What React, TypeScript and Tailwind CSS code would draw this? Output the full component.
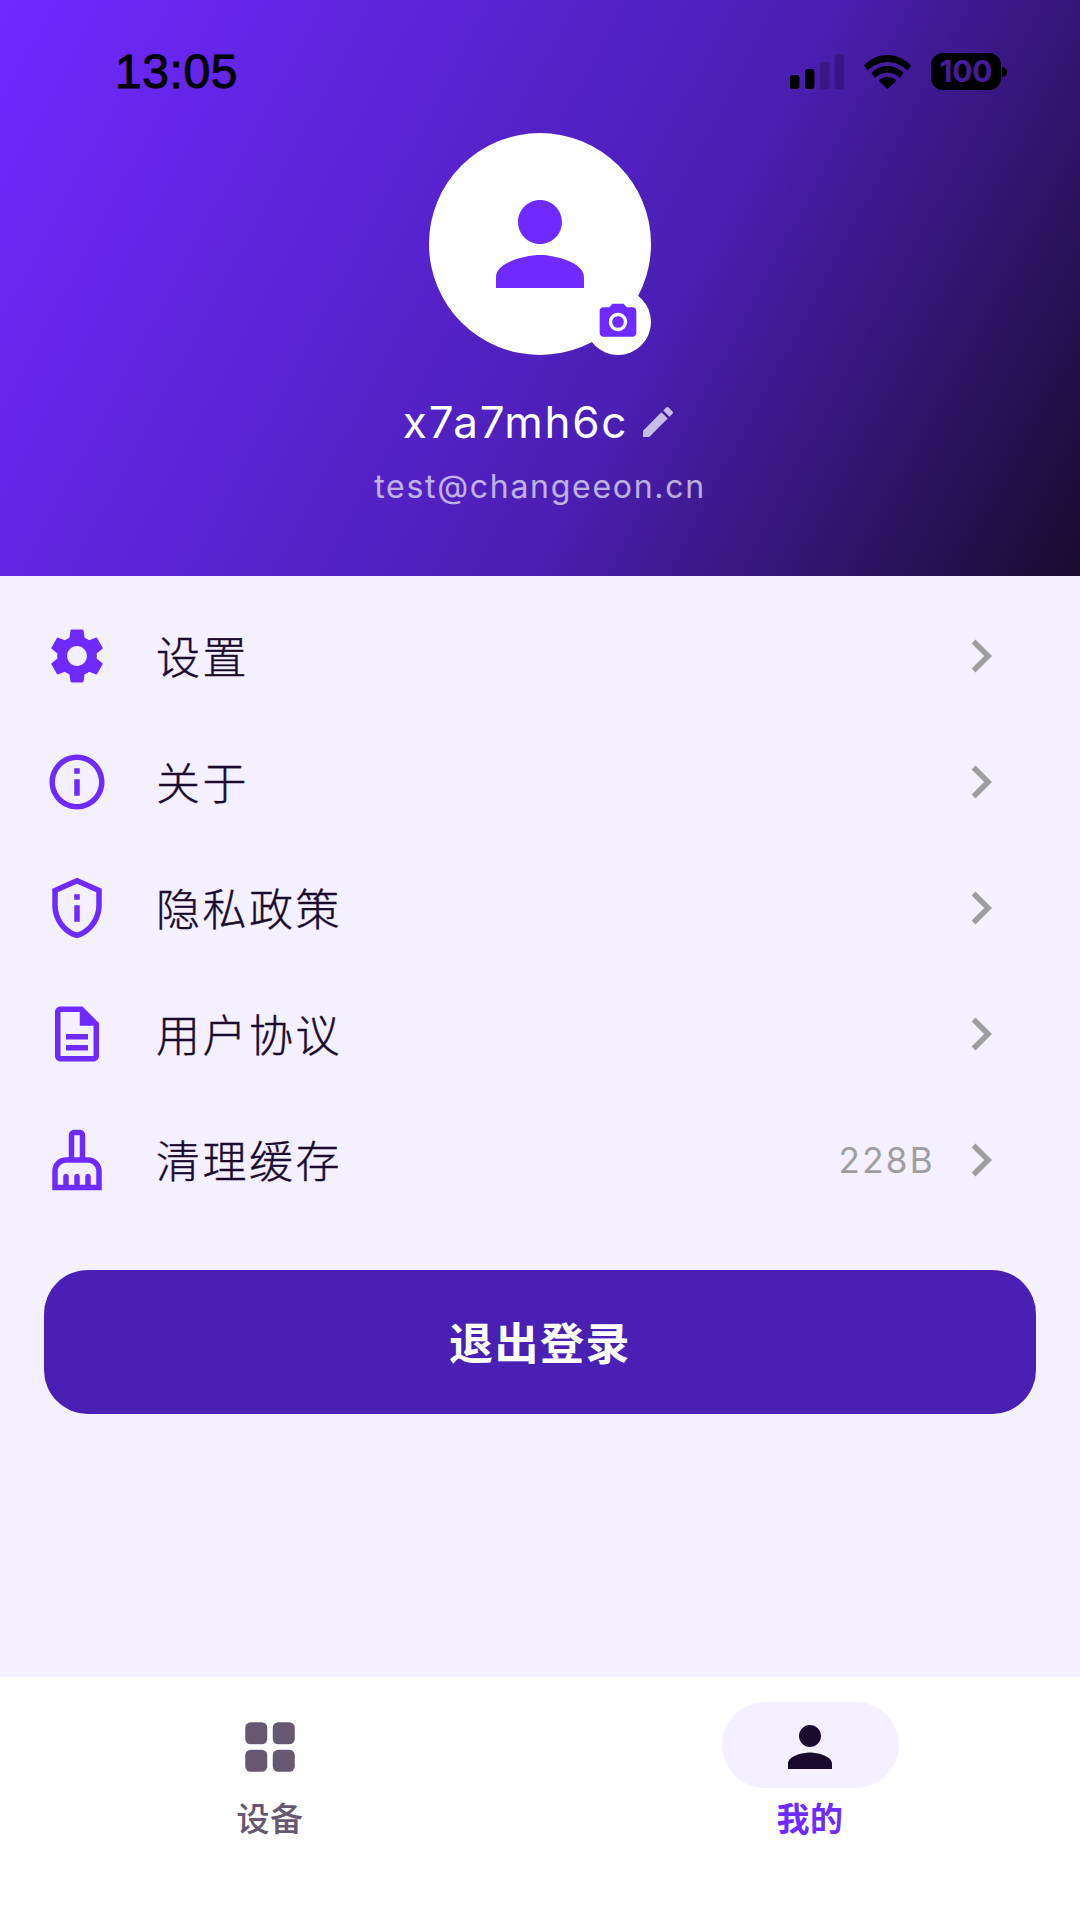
import type { ReactNode } from 'react';

const ICONS = {
    settings: 'M19.14 12.94c.04-.3.06-.61.06-.94 0-.32-.02-.64-.07-.94l2.03-1.58a.49.49 0 0 0 .12-.61l-1.92-3.32a.488.488 0 0 0-.59-.22l-2.39.96c-.5-.38-1.03-.7-1.62-.94l-.36-2.54a.484.484 0 0 0-.48-.41h-3.84c-.24 0-.43.17-.47.41l-.36 2.54c-.59.24-1.13.57-1.62.94l-2.39-.96c-.22-.08-.47 0-.59.22L2.74 8.87c-.12.21-.08.47.12.61l2.03 1.58c-.05.3-.09.63-.09.94s.02.64.07.94l-2.03 1.58a.49.49 0 0 0-.12.61l1.92 3.32c.12.22.37.29.59.22l2.39-.96c.5.38 1.03.7 1.62.94l.36 2.54c.05.24.24.41.48.41h3.84c.24 0 .44-.17.47-.41l.36-2.54c.59-.24 1.13-.56 1.62-.94l2.39.96c.22.08.47 0 .59-.22l1.92-3.32c.12-.22.07-.47-.12-.61l-2.01-1.58zM12 15.6c-1.98 0-3.6-1.62-3.6-3.6s1.62-3.6 3.6-3.6 3.6 1.62 3.6 3.6-1.62 3.6-3.6 3.6z',
    info: 'M11 7h2v2h-2zm0 4h2v6h-2zm1-9C6.48 2 2 6.48 2 12s4.48 10 10 10 10-4.48 10-10S17.52 2 12 2zm0 18c-4.41 0-8-3.59-8-8s3.59-8 8-8 8 3.59 8 8-3.59 8-8 8z',
    privacy: 'M12 1L3 5v6c0 5.55 3.84 10.74 9 12 5.16-1.26 9-6.45 9-12V5l-9-4zm7 10c0 4.52-2.98 8.69-7 9.93-4.02-1.24-7-5.41-7-9.93V6.3l7-3.11 7 3.11V11zM11 7h2v2h-2zm0 4h2v6h-2z',
    doc: 'M8 16h8v2H8zm0-4h8v2H8zm6-10H6c-1.1 0-2 .9-2 2v16c0 1.1.89 2 1.99 2H18c1.1 0 2-.9 2-2V8l-6-6zm4 18H6V4h7v5h5v11z',
    broom: 'M16 11h-1V3c0-1.1-.9-2-2-2h-2c-1.1 0-2 .9-2 2v8H8c-2.76 0-5 2.24-5 5v7h18v-7c0-2.76-2.24-5-5-5zm-5-8h2v8h-2V3zm8 18h-2v-3c0-.55-.45-1-1-1s-1 .45-1 1v3h-2v-3c0-.55-.45-1-1-1s-1 .45-1 1v3H9v-3c0-.55-.45-1-1-1s-1 .45-1 1v3H5v-5c0-1.65 1.35-3 3-3h8c1.65 0 3 1.35 3 3v5z',
    chevron: 'M10 6 8.59 7.41 13.17 12l-4.58 4.59L10 18l6-6z',
    person: 'M12 12c2.21 0 4-1.79 4-4s-1.79-4-4-4-4 1.79-4 4 1.79 4 4 4zm0 2c-2.67 0-8 1.34-8 4v2h16v-2c0-2.66-5.33-4-8-4z',
    camera: 'M12 15.2a3.2 3.2 0 1 0 0-6.4 3.2 3.2 0 0 0 0 6.4zM9 2 7.17 4H4c-1.1 0-2 .9-2 2v12c0 1.1.9 2 2 2h16c1.1 0 2-.9 2-2V6c0-1.1-.9-2-2-2h-3.17L15 2H9zm3 15c-2.76 0-5-2.24-5-5s2.24-5 5-5 5 2.24 5 5-2.24 5-5 5z',
    edit: 'M3 17.25V21h3.75L17.81 9.94l-3.75-3.75L3 17.25zM20.71 7.04c.39-.39.39-1.02 0-1.41l-2.34-2.34a.996.996 0 0 0-1.41 0l-1.83 1.83 3.75 3.75 1.83-1.83z',
};

function Icon({ d, className }: { d: string; className: string }) {
    return (
        <svg viewBox="0 0 24 24" fill="currentColor" className={className}>
            <path d={d} />
        </svg>
    );
}

function StatusBar() {
    return (
        <div className="flex h-[133px] items-start pt-[48px] pl-[115px] pr-[73px] text-black">
            <span className="font-['Liberation_Sans'] text-[48px] leading-[47px] tracking-[0.6px] [-webkit-text-stroke:1px_black]">13:05</span>
            <div className="ml-auto flex items-start gap-[20px] pt-[6px]">
                <svg viewBox="0 0 54 35" className="h-[35px] w-[54px]">
                    <rect x="0" y="21" width="9.500" height="14" rx="3" fill="#000" />
                    <rect x="15" y="15" width="9.500" height="20" rx="3" fill="#000" />
                    <rect x="30" y="8" width="9.500" height="27" rx="3" fill="#000" opacity="0.22" />
                    <rect x="44.500" y="0" width="9.500" height="35" rx="3" fill="#000" opacity="0.22" />
                </svg>
                <svg viewBox="0 0 47 34" className="mt-px h-[34px] w-[47px]">
                    <path d="M23.500 0C14.500 0 6.500 3.600 0 10.500L3.500 15.500C9 10.500 15.800 7 23.500 7S38 10.500 43.500 15.500L47 10.500C40.500 3.600 32.500 0 23.500 0Z" fill="#000" />
                    <path d="M23.500 11C17.500 11 12 13.300 7.500 18L11 23C14.500 19.800 18.800 17.500 23.500 17.500S32.500 19.800 36 23L39.500 18C35 13.300 29.500 11 23.500 11Z" fill="#000" />
                    <path d="M23.500 22C20 22 17 23.300 14.500 25.500L23.500 34L32.500 25.500C30 23.300 27 22 23.500 22Z" fill="#000" />
                </svg>
                <div className="-mt-[1px] flex items-center gap-[1px]">
                    <div className="flex h-[37px] w-[70px] items-center justify-center rounded-[12px] bg-black text-[30px] font-bold tracking-[-0.2px] text-[#421d9c]">
                        100
                    </div>
                    <div className="h-[10px] w-[5px] rounded-r-full bg-black" />
                </div>
            </div>
        </div>
    );
}

function Profile() {
    return (
        <div className="flex flex-col items-center">
            <div className="relative flex h-[222px] w-[222px] items-center justify-center rounded-full bg-white">
                <Icon d={ICONS.person} className="h-[132px] w-[132px] text-[#6f2bff]" />
                <div className="absolute right-0 bottom-0 flex h-[66px] w-[66px] items-center justify-center rounded-full bg-white">
                    <Icon d={ICONS.camera} className="h-[44px] w-[44px] text-[#6f2bff]" />
                </div>
            </div>
            <div className="mt-[37px] flex h-[60px] items-center pl-[1px]">
                <span className="text-[44px] tracking-[1.75px] text-white">x7a7mh6c</span>
                <Icon d={ICONS.edit} className="ml-[10px] h-[40px] w-[40px] text-white/70" />
            </div>
            <span className="mt-[11px] text-[32px] leading-[48px] tracking-[1.7px] text-white/65">test@changeeon.cn</span>
        </div>
    );
}

const MENU = [
    { icon: ICONS.settings, label: '设置' },
    { icon: ICONS.info, label: '关于' },
    { icon: ICONS.privacy, label: '隐私政策' },
    { icon: ICONS.doc, label: '用户协议' },
    { icon: ICONS.broom, label: '清理缓存', value: '228B' },
];

function MenuRow({ icon, label, value }: { icon: string; label: string; value?: string }) {
    return (
        <div className="flex h-[126px] items-center pl-[44px] pr-[66px]">
            <Icon d={icon} className="h-[66px] w-[66px] text-[#6f2bff]" />
            <span className="mt-[3px] ml-[46px] text-[44px] leading-none font-light tracking-[2.5px] text-[#1a0b2e] [-webkit-text-stroke:0.4px_#1a0b2e]">{label}</span>
            {value && <span className="mr-[13px] ml-auto text-[35px] tracking-[2.3px] text-[#9e9e9e]">{value}</span>}
            <Icon d={ICONS.chevron} className={`${value ? '' : 'ml-auto '}h-[66px] w-[66px] text-[#9e9e9e]`} />
        </div>
    );
}

function NavItem({ label, active, children }: { label: string; active?: boolean; children: ReactNode }) {
    return (
        <div className="flex flex-1 flex-col items-center">
            <div className={`flex h-[86px] w-[177px] items-center justify-center rounded-full pt-[4px] ${active ? 'bg-[#f4f0ff]' : ''}`}>{children}</div>
            <span className={`mt-[11px] text-[33px] leading-[40px] tracking-[0.5px] ${active ? 'font-bold text-[#6f2bff]' : 'font-medium text-[#655870]'}`}>{label}</span>
        </div>
    );
}

export default function App() {
    return (
        <div className="flex h-[1920px] w-[1080px] flex-col overflow-hidden bg-[#f4f0ff] font-['Inter','Noto_Sans_CJK_SC',sans-serif]">
            <header className="h-[576px] bg-[linear-gradient(118deg,#7029ff_0%,#4a1fb3_60%,#1a0b2e_100%)]">
                <StatusBar />
                <Profile />
            </header>

            <main className="flex-1 pt-[17px]">
                {MENU.map((item) => (
                    <MenuRow key={item.label} {...item} />
                ))}
                <div className="mx-[44px] mt-[47px] flex h-[144px] items-center justify-center rounded-[44px] bg-[#4a1fb3] pt-[3px] text-[44px] font-bold tracking-[1.5px] text-white">
                    退出登录
                </div>
            </main>

            <nav className="flex h-[243px] bg-white pt-[25px]">
                <NavItem label="设备">
                    <svg viewBox="0 0 24 24" fill="#655870" className="h-[66px] w-[66px]">
                        <rect x="3" y="3" width="8" height="8" rx="2" />
                        <rect x="13" y="3" width="8" height="8" rx="2" />
                        <rect x="3" y="13" width="8" height="8" rx="2" />
                        <rect x="13" y="13" width="8" height="8" rx="2" />
                    </svg>
                </NavItem>
                <NavItem label="我的" active>
                    <Icon d={ICONS.person} className="h-[66px] w-[66px] text-[#1a0b2e]" />
                </NavItem>
            </nav>
        </div>
    );
}
